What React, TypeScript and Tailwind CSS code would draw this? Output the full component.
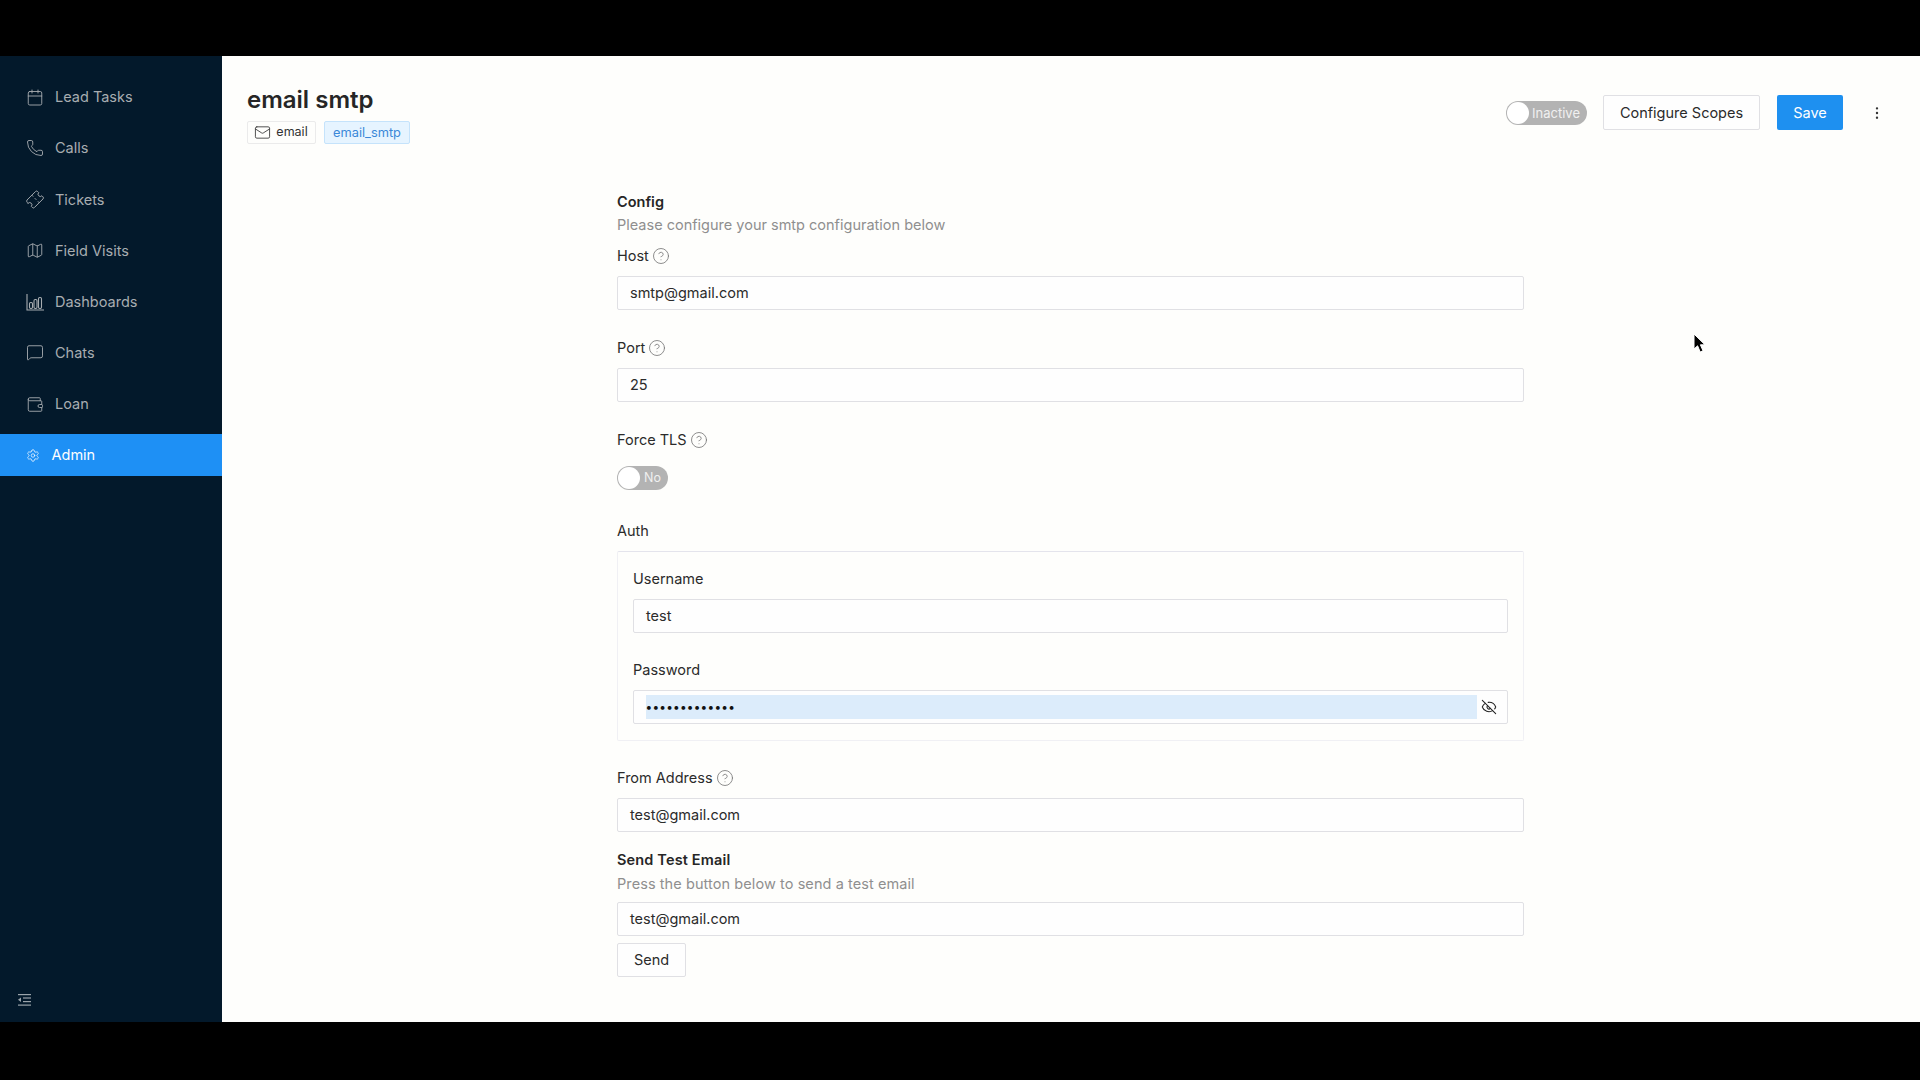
import React from "react";
import { Calendar, Phone, Ticket, Map, MessageSquare, Wallet, Settings, Mail, CircleHelp, EyeOff, EllipsisVertical } from "lucide-react";

function ChartIcon() {
  return (
    <svg width="18" height="18" viewBox="0 0 18 18" fill="none" stroke="currentColor" strokeWidth="1.1">
      <path d="M1 1v16h17" />
      <rect x="3.5" y="9.5" width="3" height="6" rx="1.2" />
      <rect x="8" y="6.5" width="3" height="9" rx="1.2" />
      <rect x="12.5" y="4.5" width="3" height="11" rx="1.2" />
    </svg>
  );
}

const nav: [string, React.ReactNode][] = [
  ["Lead Tasks", <Calendar size={21} strokeWidth={1.2} />],
  ["Calls", <Phone size={20} strokeWidth={1.2} />],
  ["Tickets", <Ticket size={21} strokeWidth={1.2} className="-rotate-45" />],
  ["Field Visits", <Map size={21} strokeWidth={1.2} />],
  ["Dashboards", <ChartIcon />],
  ["Chats", <MessageSquare size={21} strokeWidth={1.2} />],
  ["Loan", <Wallet size={21} strokeWidth={1.2} />],
];

function Help() {
  return <CircleHelp size={18} strokeWidth={1.1} className="text-[#777777] ml-[3px]" />;
}

function Label({ text, help, cls }: { text: string; help?: boolean; cls: string }) {
  return (
    <div className={"flex items-center h-[20px] text-[14.5px] leading-[20px] text-[#2b2b2b] " + cls}>
      {text}
      {help && <Help />}
    </div>
  );
}

function Input({ value, cls }: { value: string; cls?: string }) {
  return (
    <div className={"flex items-center h-[34px] px-[12px] border border-[#e0e0e4] rounded-[2px] bg-[#fefefe] text-[14.5px] text-[#2b2b2b] " + (cls || "")}>
      {value}
    </div>
  );
}

export default function App() {
  return (
    <div className="w-[1920px] h-[1080px] bg-black flex flex-col overflow-hidden relative font-['Inter','Liberation_Sans',sans-serif]">
      <div className="h-[56px] shrink-0" />
      <div className="h-[966px] flex shrink-0">
        <aside className="w-[222px] shrink-0 bg-[#03192b] pt-[20px] flex flex-col relative">
          {nav.map(([t, icon]) => (
            <div key={t} className="h-[42px] mb-[9.2px] flex items-center pl-[26px] text-[14.5px] text-[#a8adb1]">
              <span className="w-[18px] h-[18px] flex items-center justify-center mr-[11px]">{icon}</span>
              <span>{t}</span>
            </div>
          ))}
          <div className="h-[42px] flex items-center pl-[26px] bg-[#1e90f5] text-[14.5px] text-white">
            <span className="w-[14px] h-[18px] flex items-center justify-center mr-[11.5px]">
              <Settings size={17} strokeWidth={1.2} />
            </span>
            <span>Admin</span>
          </div>
          <div className="mt-auto mb-[15px] ml-[18px] text-[#9aa3aa]">
            <svg width="14" height="14" viewBox="0 0 14 14" fill="currentColor" className="block">
              <rect x="0" y="1" width="13" height="1.2" />
              <rect x="5" y="4.4" width="8" height="1.2" />
              <rect x="5" y="8" width="8" height="1.2" />
              <rect x="0" y="11.5" width="13" height="1.2" />
              <path d="M0 6.8 3 4.6v4.4z" />
            </svg>
          </div>
        </aside>
        <main className="flex-1 bg-[#fefefc] relative">
          <header className="flex justify-between pl-[25px] pr-[35px]">
            <div className="pt-[29px]">
              <h1 className="text-[24px] leading-[30px] font-semibold text-[#262626]">email smtp</h1>
              <div className="flex gap-[8px] mt-[6px]">
                <div className="h-[23px] w-[69px] flex items-center justify-center gap-[5px] pr-[1px] border border-[#ebebeb] rounded-[2px] text-[12.5px] text-[#333]">
                  <Mail size={17} strokeWidth={1.2} />
                  email
                </div>
                <div className="h-[23px] w-[86px] flex items-center justify-center border border-[#c5e3fb] bg-[#e6f4ff] rounded-[2px] text-[12.8px] text-[#3b88d8]">
                  email_smtp
                </div>
              </div>
            </div>
            <div className="flex items-center mt-[39px] h-[35px]">
              <div className="relative w-[81px] h-[24px] rounded-full bg-[#b3b3b3] mr-[16px] flex items-center justify-end pr-[7px] pt-[2px] text-[13px] text-[#f0f0f0]">
                <span className="absolute left-[1px] top-[1px] w-[22px] h-[22px] rounded-full bg-white" />
                Inactive
              </div>
              <div className="w-[157px] h-[35px] flex items-center justify-center pt-[1px] border border-[#e0e0e4] rounded-[2px] bg-[#fefefe] text-[14.5px] text-[#2b2b2b]">Configure Scopes</div>
              <div className="w-[66px] h-[35px] ml-[17px] flex items-center justify-center pt-[1px] rounded-[2px] bg-[#1e90f0] text-[14.5px] text-white">Save</div>
              <EllipsisVertical size={16} strokeWidth={1.6} className="ml-[26px] text-[#333]" />
            </div>
          </header>

          <section className="w-[907px] ml-[395px] mt-[48px]">
            <div className="text-[14.5px] leading-[20px] font-semibold text-[#262626]">Config</div>
            <div className="text-[14.5px] leading-[20px] mt-[3px] text-[#8f8f8f]">Please configure your smtp configuration below</div>
            <Label text="Host" help cls="mt-[11px]" />
            <Input value="smtp@gmail.com" cls="mt-[10px]" />
            <Label text="Port" help cls="mt-[28px]" />
            <Input value="25" cls="mt-[10px]" />
            <Label text="Force TLS" help cls="mt-[28px]" />
            <div className="relative w-[51px] h-[24px] mt-[16px] rounded-full bg-[#b3b3b3] flex items-center justify-end pr-[7px] pt-[1px] text-[12.5px] text-[#f0f0f0]">
              <span className="absolute left-[1px] top-[1px] w-[22px] h-[22px] rounded-full bg-white" />
              No
            </div>
            <Label text="Auth" cls="mt-[31px]" />
            <div className="border border-[#f0f0f4] border-t-[#e4e4ec] mt-[10px] px-[15px] pt-[17px] pb-[16px] rounded-[2px]">
              <Label text="Username" cls="" />
              <Input value="test" cls="mt-[10px]" />
              <Label text="Password" cls="mt-[27px]" />
              <div className="flex items-center h-[34px] mt-[10px] pl-[12px] pr-[10px] border border-[#e0e0e4] rounded-[2px] bg-[#fefefe] text-[#111]">
                <div className="flex-1 h-[24px] bg-[#dcecfb] flex items-center text-[12px] tracking-[1.2px] font-bold">•••••••••••••</div>
                <EyeOff size={16} strokeWidth={1.6} className="ml-[4px] mr-[0.5px] text-[#222]" />
              </div>
            </div>
            <Label text="From Address" help cls="mt-[27px]" />
            <Input value="test@gmail.com" cls="mt-[10px]" />
            <div className="text-[14.5px] leading-[20px] mt-[18px] font-semibold tracking-[0.15px] text-[#262626]">Send Test Email</div>
            <div className="text-[14.5px] leading-[20px] mt-[4px] tracking-[0.08px] text-[#8f8f8f]">Press the button below to send a test email</div>
            <Input value="test@gmail.com" cls="mt-[8px]" />
            <div className="w-[69px] h-[34px] mt-[7px] flex items-center justify-center border border-[#e0e0e4] rounded-[2px] bg-[#fefefe] text-[14.5px] text-[#2b2b2b]">Send</div>
          </section>
        </main>
      </div>
      <svg width="14" height="22" viewBox="0 0 14 22" className="absolute left-[1693px] top-[333px]">
        <path d="M1 1v15l3.6-3.2 2.6 6.2 2.8-1.2-2.6-6H12z" fill="#000" stroke="#fff" strokeWidth="1" />
      </svg>
    </div>
  );
}
